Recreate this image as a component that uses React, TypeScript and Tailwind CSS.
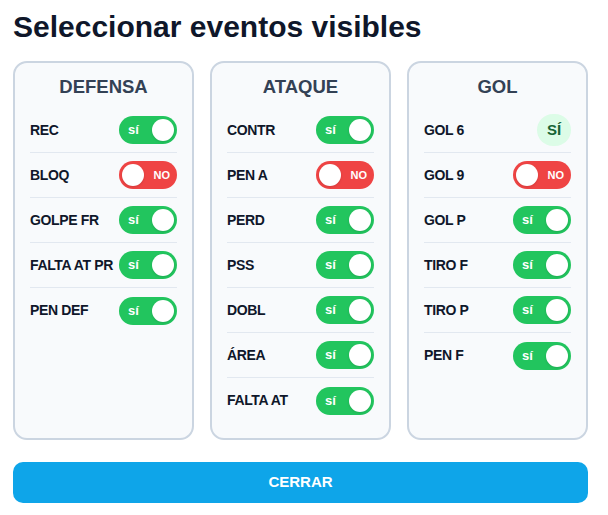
import React from 'react'

type Item = { label: string; on: boolean; badge?: boolean }

const groups: { title: string; items: Item[] }[] = [
  {
    title: 'DEFENSA',
    items: [
      { label: 'REC', on: true },
      { label: 'BLOQ', on: false },
      { label: 'GOLPE FR', on: true },
      { label: 'FALTA AT PR', on: true },
      { label: 'PEN DEF', on: true },
    ],
  },
  {
    title: 'ATAQUE',
    items: [
      { label: 'CONTR', on: true },
      { label: 'PEN A', on: false },
      { label: 'PERD', on: true },
      { label: 'PSS', on: true },
      { label: 'DOBL', on: true },
      { label: 'ÁREA', on: true },
      { label: 'FALTA AT', on: true },
    ],
  },
  {
    title: 'GOL',
    items: [
      { label: 'GOL 6', on: true, badge: true },
      { label: 'GOL 9', on: false },
      { label: 'GOL P', on: true },
      { label: 'TIRO F', on: true },
      { label: 'TIRO P', on: true },
      { label: 'PEN F', on: true },
    ],
  },
]

function Toggle({ on }: { on: boolean }) {
  if (on) {
    return (
      <span className="flex h-[28px] w-[58px] shrink-0 items-center justify-between rounded-full bg-[#22c55e] pl-[9px] pr-[3px]">
        <span className="text-[13px] font-bold text-white">sí</span>
        <span className="h-[22px] w-[22px] rounded-full bg-white shadow-sm" />
      </span>
    )
  }
  return (
    <span className="flex h-[28px] w-[58px] shrink-0 items-center justify-between rounded-full bg-[#ef4444] pl-[3px] pr-[7px]">
      <span className="h-[22px] w-[22px] rounded-full bg-white shadow-sm" />
      <span className="text-[11px] font-black text-white">NO</span>
    </span>
  )
}

export default function App() {
  return (
    <div className="min-h-screen bg-white px-[13px] pt-[8px] text-[#0f172a]" style={{ fontFamily: '"Liberation Sans", Arial, sans-serif' }}>
      <div className="w-[575px]">
        <h1 className="mb-[15px] text-[30px] font-bold leading-[38px] text-[#0f172a]">Seleccionar eventos visibles</h1>
        <div className="grid grid-cols-3 gap-[16px]">
          {groups.map((g) => (
            <div key={g.title} className="h-[379px] rounded-[14px] border-2 border-[#cbd5e1] bg-[#f8fafc] px-[15px] pt-[10px]">
              <h2 className="mb-[7px] text-center text-[18.5px] font-bold leading-[28px] text-[#334155]">{g.title}</h2>
              <div className="divide-y divide-[#e2e8f0]">
                {g.items.map((item) => (
                  <div key={item.label} className="flex h-[45px] items-center justify-between">
                    <span className="whitespace-nowrap text-[14px] font-bold tracking-tight text-[#0f172a]">{item.label}</span>
                    {item.badge ? (
                      <span className="flex h-[32px] w-[34px] items-center justify-center rounded-full bg-[#dcfce7] text-[15px] font-bold text-[#166534]">SÍ</span>
                    ) : (
                      <Toggle on={item.on} />
                    )}
                  </div>
                ))}
              </div>
            </div>
          ))}
        </div>
        <button className="mt-[22px] h-[41px] w-full rounded-[10px] bg-[#0ea5e9] text-[15px] font-bold text-white">CERRAR</button>
      </div>
    </div>
  )
}
